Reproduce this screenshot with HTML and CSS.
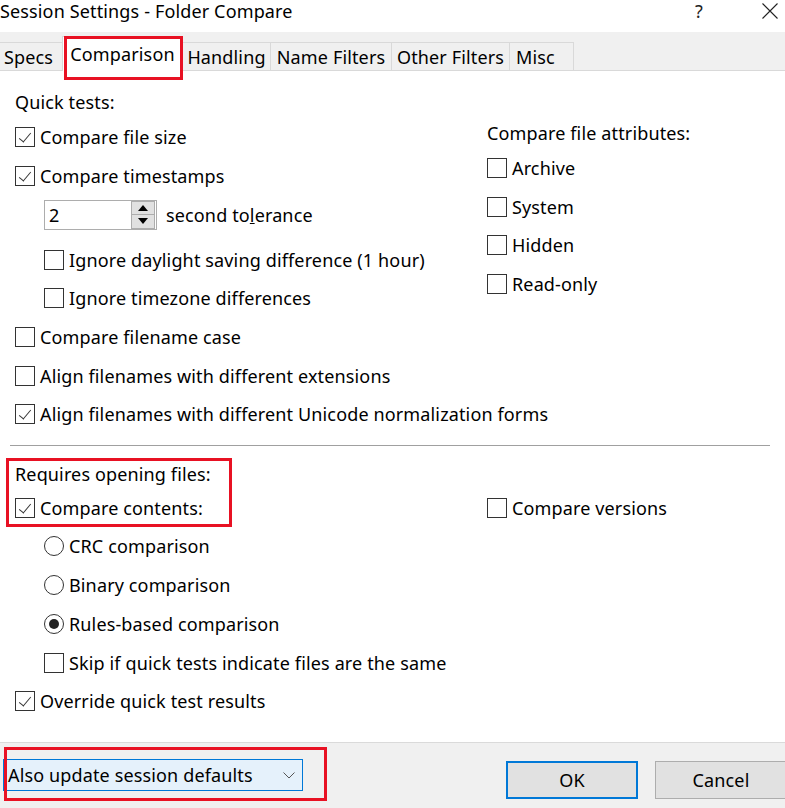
FILE: index.html
```html
<!DOCTYPE html>
<html>
<head>
<meta charset="utf-8">
<title>Session Settings - Folder Compare</title>
<link rel="stylesheet" href="styles.css">
</head>
<body>
<div class="dialog">
  <div class="titlebar">
    <span class="title">Session Settings - Folder Compare</span>
    <span class="help">?</span>
    <svg class="close" width="16" height="16" viewBox="0 0 16 16"><path d="M0.5 0.5L15.5 15.5M15.5 0.5L0.5 15.5" stroke="#222" stroke-width="1.1" fill="none"/></svg>
  </div>

  <div class="tabstrip">
    <div class="tab t-specs">Specs</div>
    <div class="tab selected t-comp">Comparison<span class="mark mark-tab"></span></div>
    <div class="tab t-hand">Handling</div>
    <div class="tab t-name">Name Filters</div>
    <div class="tab t-other">Other Filters</div>
    <div class="tab t-misc">Misc</div>
    <div class="tabfill"></div>
  </div>

  <div class="content">
    <div class="grid upper">
      <div class="col">
        <div class="row label first">Quick tests:</div>
        <div class="row after-label"><span class="cb checked"></span>Compare file size</div>
        <div class="row"><span class="cb checked"></span>Compare timestamps</div>
        <div class="row spin-row indent">
          <div class="spin">
            <span class="spin-val">2</span>
            <div class="spin-btns">
              <div class="spin-btn"><svg width="10" height="6" viewBox="0 0 10 6"><path d="M5 0L10 6H0Z" fill="#000"/></svg></div>
              <div class="spin-btn"><svg width="10" height="6" viewBox="0 0 10 6"><path d="M0 0H10L5 6Z" fill="#000"/></svg></div>
            </div>
          </div>
          <span class="spin-label">second to<u>l</u>erance</span>
        </div>
        <div class="row indent after-spin"><span class="cb"></span>Ignore daylight saving difference (1 hour)</div>
        <div class="row indent"><span class="cb"></span>Ignore timezone differences</div>
        <div class="row"><span class="cb"></span>Compare filename case</div>
        <div class="row"><span class="cb"></span>Align filenames with different extensions</div>
        <div class="row"><span class="cb checked"></span>Align filenames with different Unicode normalization forms</div>
      </div>
      <div class="col right">
        <div class="row label attr-label">Compare file attributes:</div>
        <div class="row after-label"><span class="cb"></span>Archive</div>
        <div class="row"><span class="cb"></span>System</div>
        <div class="row"><span class="cb"></span>Hidden</div>
        <div class="row"><span class="cb"></span>Read-only</div>
      </div>
    </div>

    <div class="separator"></div>

    <div class="grid lower">
      <div class="col">
        <div class="marked">
          <div class="row label">Requires opening files:</div>
          <div class="row after-label"><span class="cb checked"></span>Compare contents:</div>
          <span class="mark mark-contents"></span>
        </div>
        <div class="row indent first-radio"><span class="rb"></span>CRC comparison</div>
        <div class="row indent"><span class="rb"></span>Binary comparison</div>
        <div class="row indent"><span class="rb on"></span>Rules-based comparison</div>
        <div class="row indent"><span class="cb"></span>Skip if quick tests indicate files are the same</div>
        <div class="row"><span class="cb checked"></span>Override quick test results</div>
      </div>
      <div class="col right versions">
        <div class="row"><span class="cb"></span>Compare versions</div>
      </div>
    </div>
  </div>

  <div class="footer">
    <div class="combo-wrap">
      <div class="combo">
        <span>Also update session defaults</span>
        <svg class="chev" width="12" height="7" viewBox="0 0 12 7"><path d="M0.5 0.5L6 6L11.5 0.5" stroke="#555" stroke-width="1" fill="none"/></svg>
      </div>
      <span class="mark mark-combo"></span>
    </div>
    <div class="buttons">
      <div class="btn default">OK</div>
      <div class="btn">Cancel</div>
    </div>
  </div>
</div>
</body>
</html>
```

FILE: styles.css
```css
* { box-sizing: border-box; }
html, body {
  margin: 0;
  padding: 0;
  width: 785px;
  height: 808px;
  overflow: hidden;
  background: #fff;
}
body {
  font-family: "Noto Sans", "Open Sans", sans-serif;
  font-size: 18px;
  letter-spacing: 0.14px;
  color: #000;
}
.dialog {
  width: 785px;
  height: 808px;
  display: flex;
  flex-direction: column;
}

/* title bar */
.titlebar {
  height: 32px;
  display: flex;
  align-items: flex-start;
  background: #fff;
}
.title {
  line-height: 22px;
}
.help {
  margin-left: auto;
  margin-right: 59px;
  line-height: 22px;
  color: #222;
}
.close {
  margin-right: 7px;
  margin-top: 3px;
}

/* tabs */
.tabstrip {
  height: 39px;
  background: #f0f0f0;
  display: flex;
  align-items: flex-end;
}
.tab {
  height: 29px;
  border-top: 1px solid #d9d9d9;
  border-right: 1px solid #d9d9d9;
  line-height: 28px;
  text-align: center;
  background: #f0f0f0;
  position: relative;
  box-shadow: inset 0 -1px 0 #d9d9d9;
  white-space: nowrap;
}
.t-specs { width: 63px; text-align: left; padding-left: 4px; }
.t-comp { width: 121px; }
.t-hand { width: 88px; }
.t-name { width: 121px; }
.t-other { width: 118px; }
.t-misc { width: 64px; text-align: left; padding-left: 6px; }
.tab.selected {
  height: 35px;
  background: #fff;
  border-left: 1px solid #d9d9d9;
  line-height: 34px;
  box-shadow: none;
  margin-left: -1px;
}
.tabfill {
  flex: 1;
  height: 1px;
  background: #d9d9d9;
}

/* annotations */
.mark {
  position: absolute;
  border: 3px solid #e81123;
  pointer-events: none;
}
.mark-tab {
  left: 1px;
  top: -1px;
  width: 119px;
  height: 44px;
}
.marked { position: relative; }
.mark-contents {
  left: -9px;
  top: -1px;
  width: 226px;
  height: 69px;
}

/* content */
.content {
  flex: 1;
  background: #fff;
  padding: 0 15px;
}
.grid {
  display: grid;
  grid-template-columns: 472px 1fr;
}
.col {
  display: flex;
  flex-direction: column;
}
.row {
  height: 30px;
  display: flex;
  align-items: center;
  white-space: nowrap;
  margin-top: 8.7px;
}
.row.first { margin-top: 16px; }
.row.after-label { margin-top: 5px; }
.row.attr-label { margin-top: 47px; }
.row.spin-row { margin-top: 9px; }
.row.after-spin { margin-top: 15px; }
.lower .row.label { margin-top: 0; }
.lower .row.after-label { margin-top: 4px; }
.row.first-radio { margin-top: 8px; }
.versions { padding-top: 25.3px; }
.indent { padding-left: 29px; }

.cb {
  width: 20px;
  height: 20px;
  border: 1px solid #333;
  margin-right: 5px;
  flex: none;
  background: #fff;
  position: relative;
}
.cb.checked::after {
  content: "";
  position: absolute;
  width: 5px;
  height: 11px;
  border-right: 1.4px solid #333;
  border-bottom: 1.4px solid #333;
  transform: rotate(40deg);
  transform-origin: center;
  left: 6px;
  top: 2px;
}
.rb {
  width: 20px;
  height: 20px;
  border: 1px solid #333;
  border-radius: 50%;
  margin-right: 5px;
  flex: none;
  display: flex;
  align-items: center;
  justify-content: center;
}
.rb.on::after {
  content: "";
  width: 10px;
  height: 10px;
  border-radius: 50%;
  background: #222;
}

/* spinner */
.spin {
  width: 113px;
  height: 30px;
  border: 1px solid #adadad;
  display: flex;
  align-items: center;
  padding-left: 4px;
  margin-right: 9px;
}
.spin-val { flex: 1; }
.spin-btns {
  width: 24px;
  height: 28px;
  display: flex;
  flex-direction: column;
  margin-right: 1px;
}
.spin-btn {
  flex: 1;
  background: #e1e1e1;
  border: 1px solid #adadad;
  display: flex;
  align-items: center;
  justify-content: center;
}
.spin-btn + .spin-btn { border-top: none; }
.spin-btn svg { width: 10px; height: 6px; }

.separator {
  margin: 16px 0 13px -5px;
  width: 760px;
  height: 1px;
  background: #a0a0a0;
}

/* footer */
.footer {
  height: 66px;
  background: #f0f0f0;
  border-top: 1px solid #dadada;
  display: flex;
  align-items: flex-start;
  justify-content: space-between;
}
.combo-wrap {
  position: relative;
  margin-top: 16px;
  margin-left: 3px;
}
.combo {
  width: 300px;
  height: 32px;
  border: 1px solid #0078d7;
  background: #e5f1fb;
  display: flex;
  align-items: center;
  padding-left: 4px;
  padding-right: 7px;
}
.combo span { flex: 1; }
.mark-combo {
  left: 1px;
  top: -12px;
  width: 323px;
  height: 54px;
}
.buttons {
  display: flex;
  gap: 17px;
  margin-top: 18px;
  margin-right: -2px;
}
.btn {
  width: 132px;
  height: 38px;
  border: 1px solid #adadad;
  background: #e1e1e1;
  display: flex;
  align-items: center;
  justify-content: center;
}
.btn.default {
  border: 2px solid #0078d7;
}
```
